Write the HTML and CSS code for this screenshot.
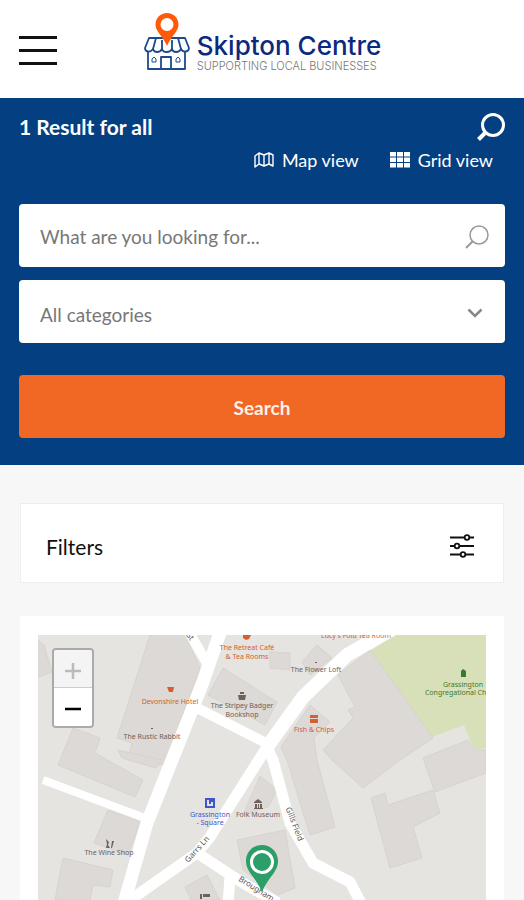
FILE: index.html
```html
<!DOCTYPE html>
<html lang="en">
<head>
  <meta charset="utf-8">
  <meta name="viewport" content="width=device-width, initial-scale=1">
  <title>Skipton Centre - Supporting Local Businesses</title>
  <link rel="stylesheet" href="styles.css">
</head>
<body>
  <header class="site-header">
    <button class="menu-btn" type="button" aria-label="Open menu">
      <span></span><span></span><span></span>
    </button>
    <a class="logo" href="#">
      <svg class="logo-icon" width="48" height="60" viewBox="0 0 48 60">
        <g fill="none" stroke="#1c4a8c" stroke-width="1.800" stroke-linejoin="round">
          <path d="M6 26h36l4 10c0 4-6 5-8 1-2 4-8 4-9 0-2 4-9 4-10 0-2 4-8 4-9 0-3 4-8 3-8-1z" fill="#fff"/>
          <path d="M13 26l-3 11M35 26l3 11M19 28v9M29 28v9"/>
          <path d="M5 40v17h37V40M18 57V45h10v12"/>
          <path d="M9 50v-3l2-2 2 2v3zM33 50v-3l2-2 2 2v3z" stroke-width="1"/>
        </g>
        <path d="M24 1c-6.500 0-11.500 5-11.500 11.500C12.500 20 20 24 24 34c4-10 11.500-14 11.500-21.500C35.500 6 30.500 1 24 1z" fill="#ff5a0a"/>
        <circle cx="24" cy="12.500" r="6.500" fill="#fff"/>
      </svg>
      <span class="logo-text">
        <span class="logo-name">Skipton Centre</span>
        <span class="logo-tag">SUPPORTING LOCAL BUSINESSES</span>
      </span>
    </a>
  </header>

  <section class="hero">
    <div class="hero-top">
      <h1>1 Result for all</h1>
      <button class="icon-btn" type="button" aria-label="Toggle search">
        <svg width="28" height="28" viewBox="0 0 28 28" fill="none" stroke="#fff" stroke-width="3">
          <circle cx="16" cy="12" r="10.500"/><path d="M8.500 19.500L1.500 26.500" stroke-width="4"/>
        </svg>
      </button>
    </div>
    <nav class="views">
      <a href="#map">
        <svg width="20" height="16" viewBox="0 0 20 16" fill="none" stroke="#fff" stroke-width="1.400" stroke-linejoin="round">
          <path d="M1 4l4-3 5 2 5-2 4 2v11l-4-2-5 2-5-2-4 3zM5 1v11M10 3v11M15 1v11"/>
        </svg>
        Map view
      </a>
      <a href="#grid">
        <svg width="20" height="16" viewBox="0 0 20 16" fill="#fff">
          <path d="M0 0h6v4.500H0zM7 0h6v4.500H7zM14 0h6v4.500h-6zM0 5.500h6V10H0zM7 5.500h6V10H7zM14 5.500h6V10h-6zM0 11h6v4.500H0zM7 11h6v4.500H7zM14 11h6v4.500h-6z"/>
        </svg>
        Grid view
      </a>
    </nav>

    <form class="search-form">
      <div class="field">
        <input type="text" aria-label="Search" placeholder="What are you looking for...">
        <svg class="field-icon" width="24" height="24" viewBox="0 0 24 24" fill="none" stroke="#999" stroke-width="1.500">
          <circle cx="14" cy="10" r="9"/><path d="M7.500 16.500L1 23" stroke-width="2"/>
        </svg>
      </div>
      <div class="field">
        <select aria-label="Category">
          <option>All categories</option>
        </select>
        <svg class="field-icon chevron" width="16" height="10" viewBox="0 0 16 10" fill="none" stroke="#888" stroke-width="2.500">
          <path d="M1.500 1.500L8 8l6.500-6.500"/>
        </svg>
      </div>
      <button class="search-btn" type="submit">Search</button>
    </form>
  </section>

  <main>
    <button class="filters" type="button">
      Filters
      <svg width="26" height="24" viewBox="0 0 26 24" fill="#fff" stroke="#111" stroke-width="1.800">
        <path d="M1 3.500h24M1 12h24M1 20.500h24"/>
        <circle cx="18" cy="3.500" r="2.300"/><circle cx="8" cy="12" r="2.300"/><circle cx="14" cy="20.500" r="2.300"/>
      </svg>
    </button>

    <div class="map-card">
      <div class="map" id="map">
        <svg class="map-tiles" viewBox="0 0 448 265" preserveAspectRatio="xMidYMin slice">
          <rect width="448" height="800" fill="#e5e4e0"/>
          <path class="park" d="M332 17L355 0H448V113L436 115 426 90 394 102z"/>

          <g class="buildings">
            <path d="M112 0H147L162 33 126 130 90 123 94 108 79 103z"/>
            <path d="M0 5L6 10 14 37 0 42z"/>
            <path d="M35 93L62 103 57 118 105 145 97 162 20 130z"/>
            <path d="M80 115L124 125 118 133 84 123z"/>
            <path d="M70 175L102 187 90 220 56 208z"/>
            <path d="M25 223L75 235 72 252 55 250 52 265H17z"/>
            <path d="M185 33L239 67 227 90 170 60z"/>
            <path d="M279 10L294 23 272 40 264 27z"/>
            <path d="M232 17L252 18V35L232 33z"/>
            <path d="M332 15L395 103 362 125 325 153 294 125 285 115 315 83 310 75 317 72 300 40z"/>
            <path d="M272 70L292 87 276 103 279 125 297 192 272 200 249 125 243 112z"/>
            <path d="M385 123L430 105 436 115H448V138L397 157z"/>
            <path d="M333 163L347 158 350 170 395 155 402 178 375 192 384 223 352 233z"/>
            <path d="M222 141L239 155 230 172 205 180z"/>
            <path d="M199 205L247 195 257 253 240 260 205 235z"/>
            <path d="M147 252L169 240 182 265H153z"/>
          </g>

          <g class="roads">
            <path d="M148 -8L170 30" stroke-width="10"/>
            <path d="M184 -8L165 47 134 125 109 188 84 275" stroke-width="13"/>
            <path d="M159 73L230 109" stroke-width="10"/>
            <path d="M358 -8L309 20 265 62 229 112" stroke-width="14"/>
            <path d="M229 112L172 202 159 218 85 270" stroke-width="11"/>
            <path d="M229 112L235 125 252 188 275 228 312 247 324 270" stroke-width="11"/>
            <path d="M5 145L107 183" stroke-width="8"/>
            <path d="M159 218L205 248 240 268M192 242L190 270" stroke-width="11"/>
          </g>

          <g class="labels">
            <g class="food">
              <text x="209" y="15">The Retreat Café</text>
              <text x="209" y="24">&amp; Tea Rooms</text>
              <text x="132" y="69">Devonshire Hotel</text>
              <text x="276" y="97">Fish &amp; Chips</text>
              <text x="318" y="3">Lucy's Fold Tea Room</text>
              <path d="M205 0h8l-2 4-3 1-3-2zM129 52h7l-1 5h-4zM272 80h8v3h-8zM272 84h8v4h-8z"/>
            </g>
            <g class="shop">
              <text x="278" y="37">The Flower Loft</text>
              <text x="204" y="73">The Stripey Badger</text>
              <text x="204" y="82">Bookshop</text>
              <text x="114" y="104">The Rustic Rabbit</text>
              <text x="71" y="220">The Wine Shop</text>
              <text x="220" y="182">Folk Museum</text>
              <path d="M200 60h8l-1 5h-6zM202 57h4v2h-4zM68 204l3 3-1 3 2 3h-4l1-4zM74 206h2l-2 7h-1zM216 167l4-3 4 3v1h-8zM217 169h2v4h-2zM220 169h1v4h-1zM222 169h2v4h-2zM216 173h9v1h-9zM162 259h2v5h-2zM165 259h7v3h-7zM277 27h2v1h-2zM113 93h2v1h-2z"/>
            </g>
            <g class="church">
              <text x="425" y="52">Grassington</text>
              <text x="425" y="60">Congregational Church</text>
              <path d="M423 36l2-2 3 2v6h-5z"/>
            </g>
            <g class="square">
              <text x="172" y="182">Grassington</text>
              <text x="172" y="190">- Square</text>
              <path fill-rule="evenodd" d="M167 163h10v10h-10zM169 165v6h6v-4h-2v2h-2v-4z"/>
            </g>
            <g class="street">
              <text transform="translate(161 216) rotate(-48)">Garrs Ln</text>
              <text transform="translate(254 190) rotate(69)">Gills Field</text>
              <text transform="translate(217 256) rotate(32)">Brougham</text>
              <text transform="translate(150 3) rotate(55)">St</text>
            </g>
          </g>

          <path d="M224 210c-9 0-16 7-16 16 0 11 9 15 16 31 7-16 16-20 16-31 0-9-7-16-16-16z" fill="#2b9f67"/>
          <circle cx="224" cy="227" r="10.500" fill="none" stroke="#fff" stroke-width="3"/>
        </svg>
        <div class="zoom">
          <button type="button" aria-label="Zoom in" disabled>
            <svg width="18" height="18" viewBox="0 0 18 18" stroke="#bbb" stroke-width="2.500"><path d="M1 9h16M9 1v16"/></svg>
          </button>
          <button type="button" aria-label="Zoom out">
            <svg width="18" height="18" viewBox="0 0 18 18" stroke="#000" stroke-width="2.500"><path d="M1 9h16"/></svg>
          </button>
        </div>
      </div>
    </div>
  </main>
</body>
</html>
```
FILE: styles.css
```css
* { box-sizing: border-box; }
body {
  margin: 0;
  min-height: 100vh;
  display: flex;
  flex-direction: column;
  font-family: Lato, "Open Sans", sans-serif;
  font-size: 19px;
  background: #f7f7f7;
  color: #111;
}
button, input, select { font: inherit; }
button { cursor: pointer; }
a { color: inherit; text-decoration: none; }
svg { display: block; flex: none; }

/* header */
.site-header {
  display: grid;
  grid-template-columns: 38px 1fr 38px;
  align-items: center;
  height: 98px;
  padding: 0 19px;
  background: #fff;
}
.menu-btn {
  display: flex;
  flex-direction: column;
  gap: 10px;
  padding: 3px 0 0;
  border: 0;
  background: none;
}
.menu-btn span { width: 38px; height: 3px; background: #111; }
.logo {
  display: flex;
  justify-content: center;
  align-items: flex-end;
  gap: 6px;
  padding-bottom: 14px;
}
.logo-text {
  display: flex;
  flex-direction: column;
  white-space: nowrap;
  font-family: Inter, sans-serif;
}
.logo-name { font-size: 26px; line-height: 28px; font-weight: 500; color: #0a2a80; }
.logo-tag { font-size: 11px; line-height: 12px; font-weight: 300; color: #777; }

/* search area */
.hero { padding: 12px 19px 27px; background: #043f82; color: #fff; }
.hero-top { display: flex; justify-content: space-between; align-items: center; height: 34px; }
.hero h1 { margin: 0; font-size: 21px; line-height: 24px; font-weight: 700; }
.icon-btn { padding: 0; border: 0; background: none; }
.views {
  display: flex;
  justify-content: flex-end;
  gap: 31px;
  height: 32px;
  padding-right: 12px;
  font-size: 18px;
}
.views a { display: flex; align-items: center; gap: 8px; }
.search-form { display: flex; flex-direction: column; gap: 13px; margin-top: 28px; }
.field { position: relative; }
.field input, .field select {
  display: block;
  width: 100%;
  height: 63px;
  padding: 1px 60px 0 21px;
  border: 0;
  border-radius: 4px;
  background: #fff;
  color: #777;
  appearance: none;
}
.field select { padding-top: 5px; }
.field input::placeholder { color: #777; opacity: 1; }
.field-icon { position: absolute; right: 16px; top: 21px; pointer-events: none; }
.chevron { right: 22px; top: 28px; }
.search-btn {
  height: 63px;
  margin-top: 19px;
  padding: 1px 0 0;
  border: 0;
  border-radius: 4px;
  background: #f16724;
  color: #fff0e8;
  font-weight: 700;
}

/* results */
main {
  flex: 1;
  display: flex;
  flex-direction: column;
  gap: 33px;
  padding: 38px 20px 0;
}
.filters {
  display: flex;
  justify-content: space-between;
  align-items: center;
  height: 80px;
  padding: 6px 28px 0 25px;
  border: 1px solid #eee;
  background: #fff;
  color: #111;
  font-size: 21px;
}
.map-card { flex: 1; display: flex; padding: 19px 18px 0; background: #fff; }
.map { position: relative; flex: 1; min-height: 265px; overflow: hidden; }
.map-tiles { position: absolute; inset: 0; width: 100%; height: 100%; }
.park { fill: #d8e0b9; }
.buildings { fill: #dcd9d6; stroke: #d7d3cf; stroke-width: 1; }
.roads { fill: none; stroke: #fff; stroke-linejoin: round; }
.labels { font-family: "Noto Sans", sans-serif; font-size: 7px; text-anchor: middle; }
.food { fill: #d4602c; }
.shop { fill: #70605a; }
.church { fill: #397a32; }
.square { fill: #4055cc; }
.street { fill: #555; font-size: 8px; }

.zoom {
  position: absolute;
  left: 14px;
  top: 13px;
  width: 42px;
  border: 2px solid #aaa;
  border-radius: 4px;
  overflow: hidden;
}
.zoom button {
  display: flex;
  align-items: center;
  justify-content: center;
  width: 100%;
  height: 38px;
  padding: 4px 0 0;
  border: 0;
  background: #fff;
}
.zoom button:disabled { background: #f4f4f4; border-bottom: 1px solid #ccc; }
```
